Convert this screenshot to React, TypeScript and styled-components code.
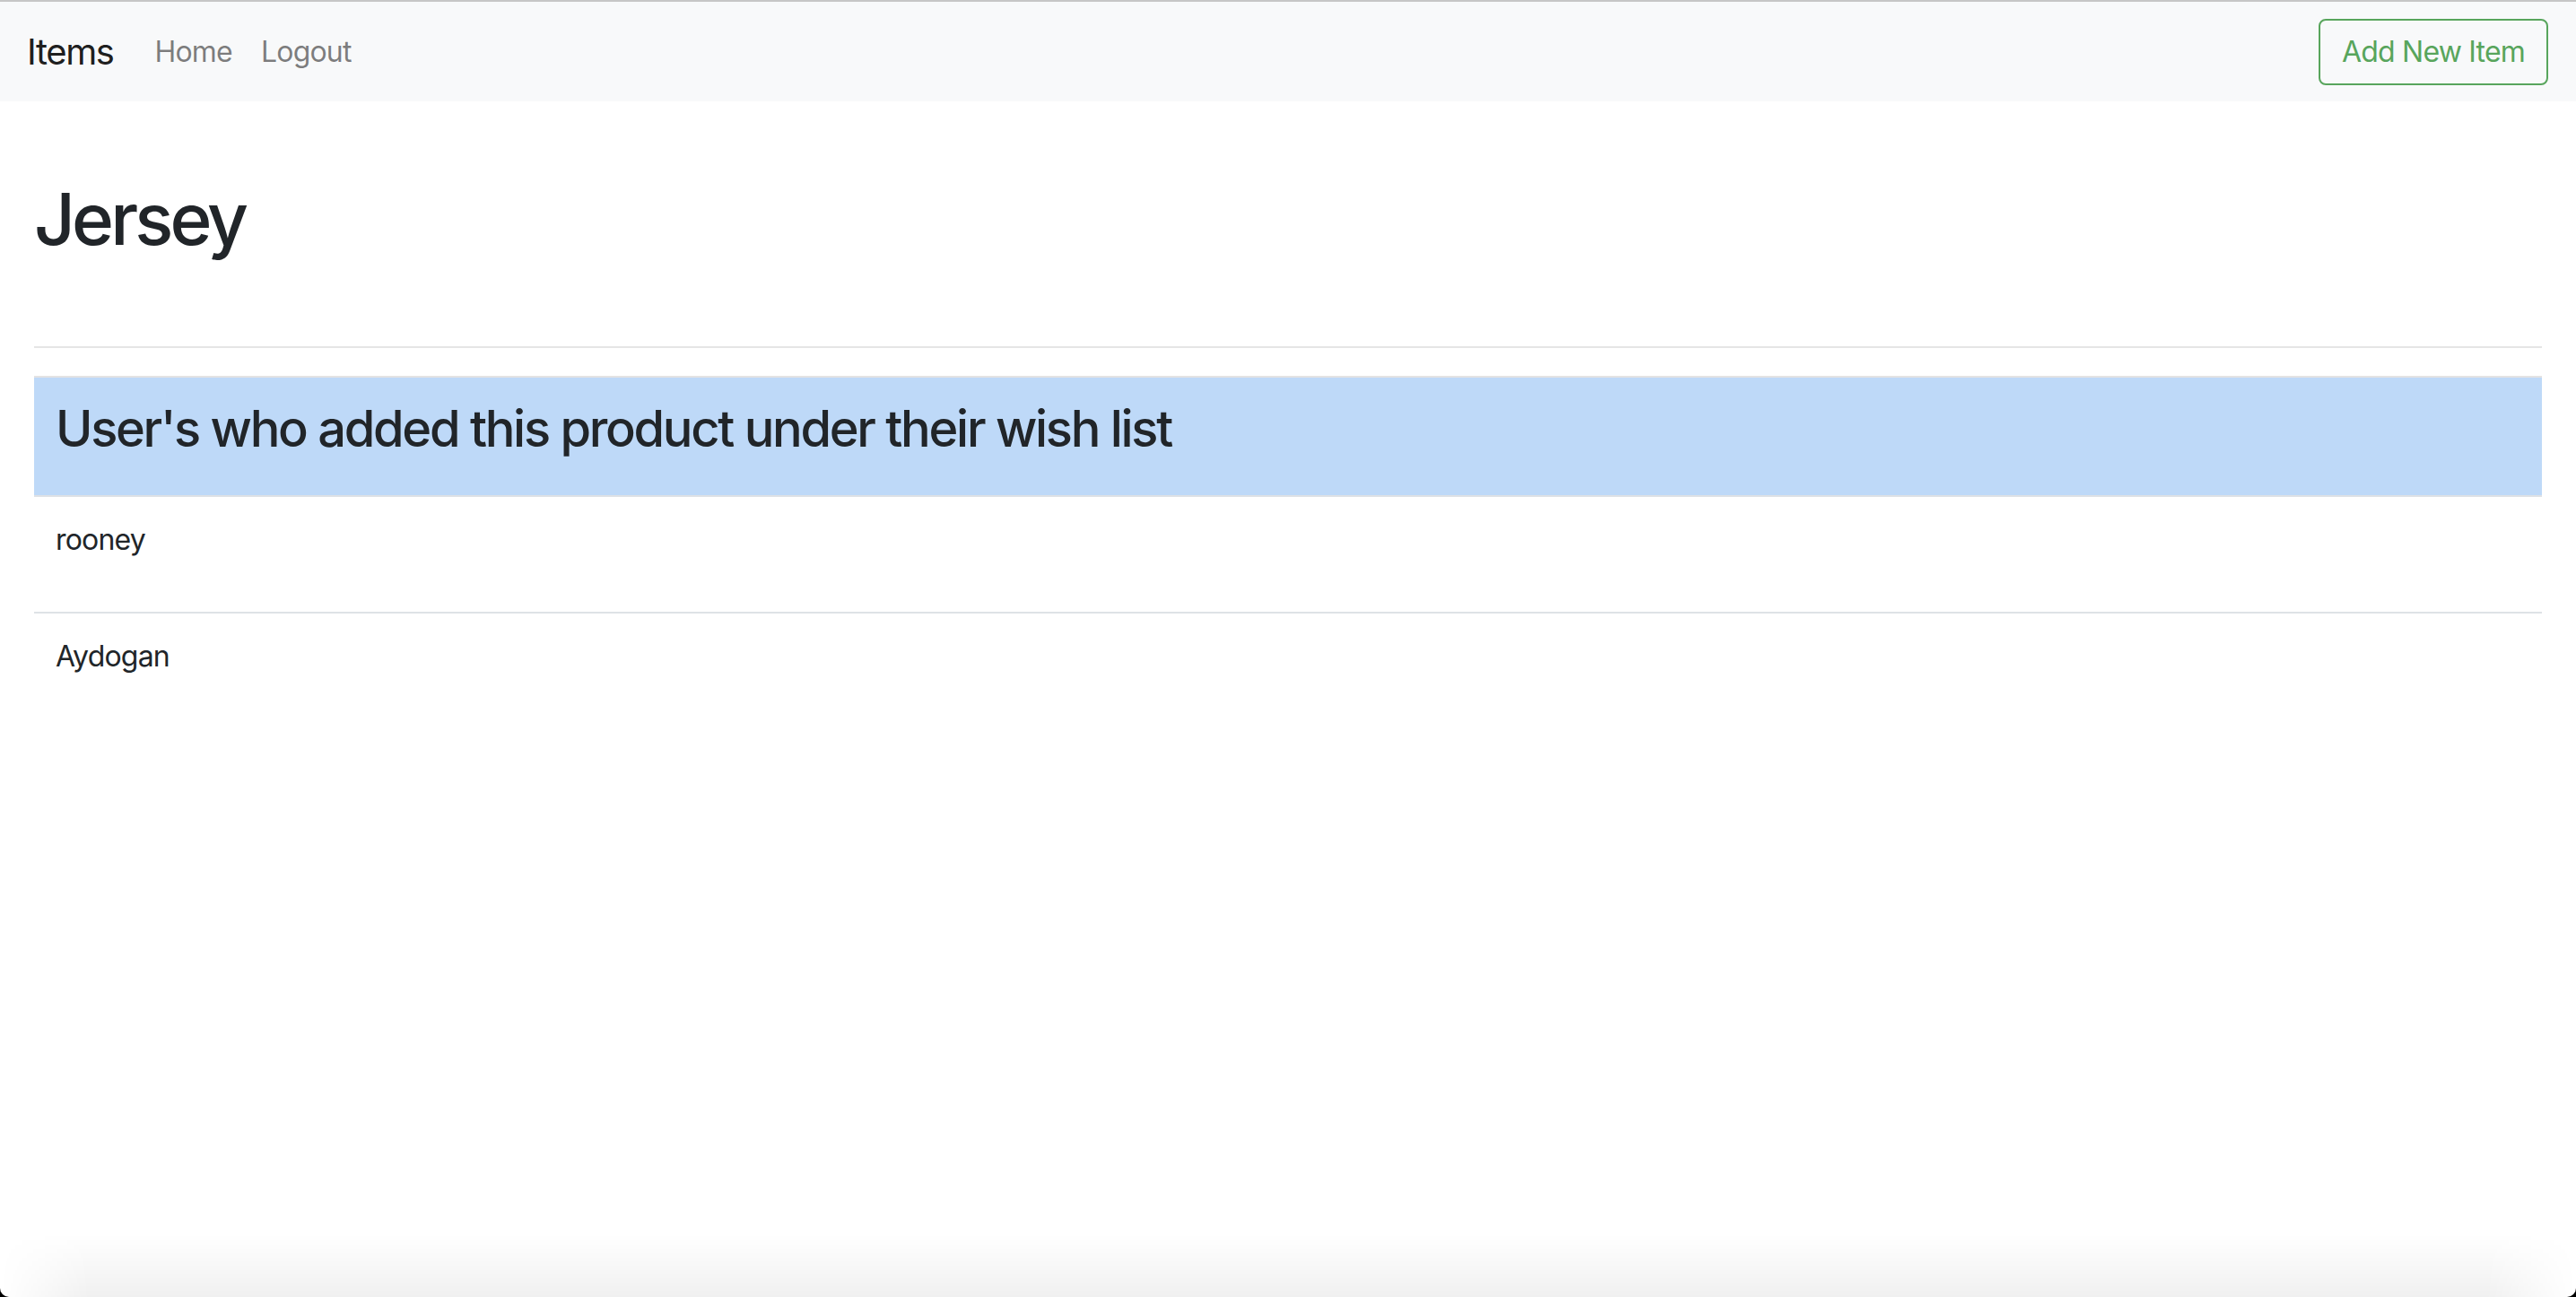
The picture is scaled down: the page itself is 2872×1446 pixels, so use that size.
import styled, { createGlobalStyle } from "styled-components"

const GlobalStyle = createGlobalStyle`
    html, body {
        margin: 0;
        padding: 0;
        background: #fff;
    }
    body {
        font-family: Inter, "Noto Sans", "Liberation Sans", sans-serif;
        color: #212529;
        font-size: 32px;
        line-height: 1.5;
        letter-spacing: -0.8px;
    }
    * {
        box-sizing: border-box;
    }
`

const Navbar = styled.nav`
    display: flex;
    align-items: center;
    justify-content: space-between;
    height: 113px;
    padding: 0 31px 0 30px;
    background: #f8f9fa;
    border-top: 2px solid #c6c6c6;
`

const NavLeft = styled.div`
    display: flex;
    align-items: center;
`

const Brand = styled.a`
    font-size: 40px;
    line-height: 1.5;
    letter-spacing: -1.4px;
    color: rgba(0, 0, 0, 0.9);
    margin-right: 30px;
    text-decoration: none;
`

const NavLink = styled.a`
    font-size: 32px;
    color: rgba(0, 0, 0, 0.5);
    padding: 0 16px;
    text-decoration: none;
`

const OutlineButton = styled.button`
    font-family: inherit;
    font-size: 32px;
    line-height: 1.5;
    letter-spacing: -0.8px;
    color: #58a55c;
    background: transparent;
    border: 2px solid #58a55c;
    border-radius: 8px;
    padding: 11px 24px;
    cursor: pointer;
`

const Container = styled.main`
    padding: 0 38px;
`

const Title = styled.h1`
    font-size: 80px;
    font-weight: 500;
    line-height: 1.2;
    margin: 83px 0 0;
    letter-spacing: -3.9px;
`

const Divider = styled.hr`
    border: 0;
    border-top: 2px solid #e5e5e5;
    margin: 94px 0 31px;
`

const Table = styled.table`
    width: 100%;
    border-collapse: collapse;
`

const HeadCell = styled.th`
    text-align: left;
    background: #bed9f8;
    border-top: 2px solid #e3e3e3;
    border-bottom: 2px solid #dde1e5;
    padding: 24px 24px;
`

const HeadTitle = styled.h3`
    font-size: 56px;
    font-weight: 500;
    line-height: 1.2;
    margin: 0 0 16px;
    letter-spacing: -2.3px;
`

const Cell = styled.td<{ $first?: boolean }>`
    padding: 24px;
    border-top: ${p => (p.$first ? "0" : "2px solid #dee2e6")};
`

const UserName = styled.p`
    margin: 0 0 32px;
    font-size: 32px;
    line-height: 1.5;
`

const BottomShade = styled.div`
    position: fixed;
    left: 0;
    right: 0;
    bottom: 0;
    height: 70px;
    pointer-events: none;
    background: linear-gradient(to bottom, rgba(0, 0, 0, 0), rgba(0, 0, 0, 0.06));
    -webkit-mask-image: linear-gradient(to right, transparent 0, #000 100px, #000 calc(100% - 100px), transparent 100%);
    mask-image: linear-gradient(to right, transparent 0, #000 100px, #000 calc(100% - 100px), transparent 100%);
`

const WindowCorners = styled.div`
    position: fixed;
    inset: 0;
    pointer-events: none;
    border-radius: 0 0 10px 10px;
    box-shadow: 0 0 0 40px #000;
`

const users = ["rooney", "Aydogan"]

function App() {
    return (
        <>
            <GlobalStyle />
            <Navbar>
                <NavLeft>
                    <Brand href="#">Items</Brand>
                    <NavLink href="#">Home</NavLink>
                    <NavLink href="#">Logout</NavLink>
                </NavLeft>
                <OutlineButton>Add New Item</OutlineButton>
            </Navbar>
            <Container>
                <Title>Jersey</Title>
                <Divider />
                <Table>
                    <thead>
                        <tr>
                            <HeadCell>
                                <HeadTitle>User's who added this product under their wish list</HeadTitle>
                            </HeadCell>
                        </tr>
                    </thead>
                    <tbody>
                        {users.map((u, i) => (
                            <tr key={u}>
                                <Cell $first={i === 0}>
                                    <UserName>{u}</UserName>
                                </Cell>
                            </tr>
                        ))}
                    </tbody>
                </Table>
            </Container>
            <BottomShade />
            <WindowCorners />
        </>
    )
}

export default App
